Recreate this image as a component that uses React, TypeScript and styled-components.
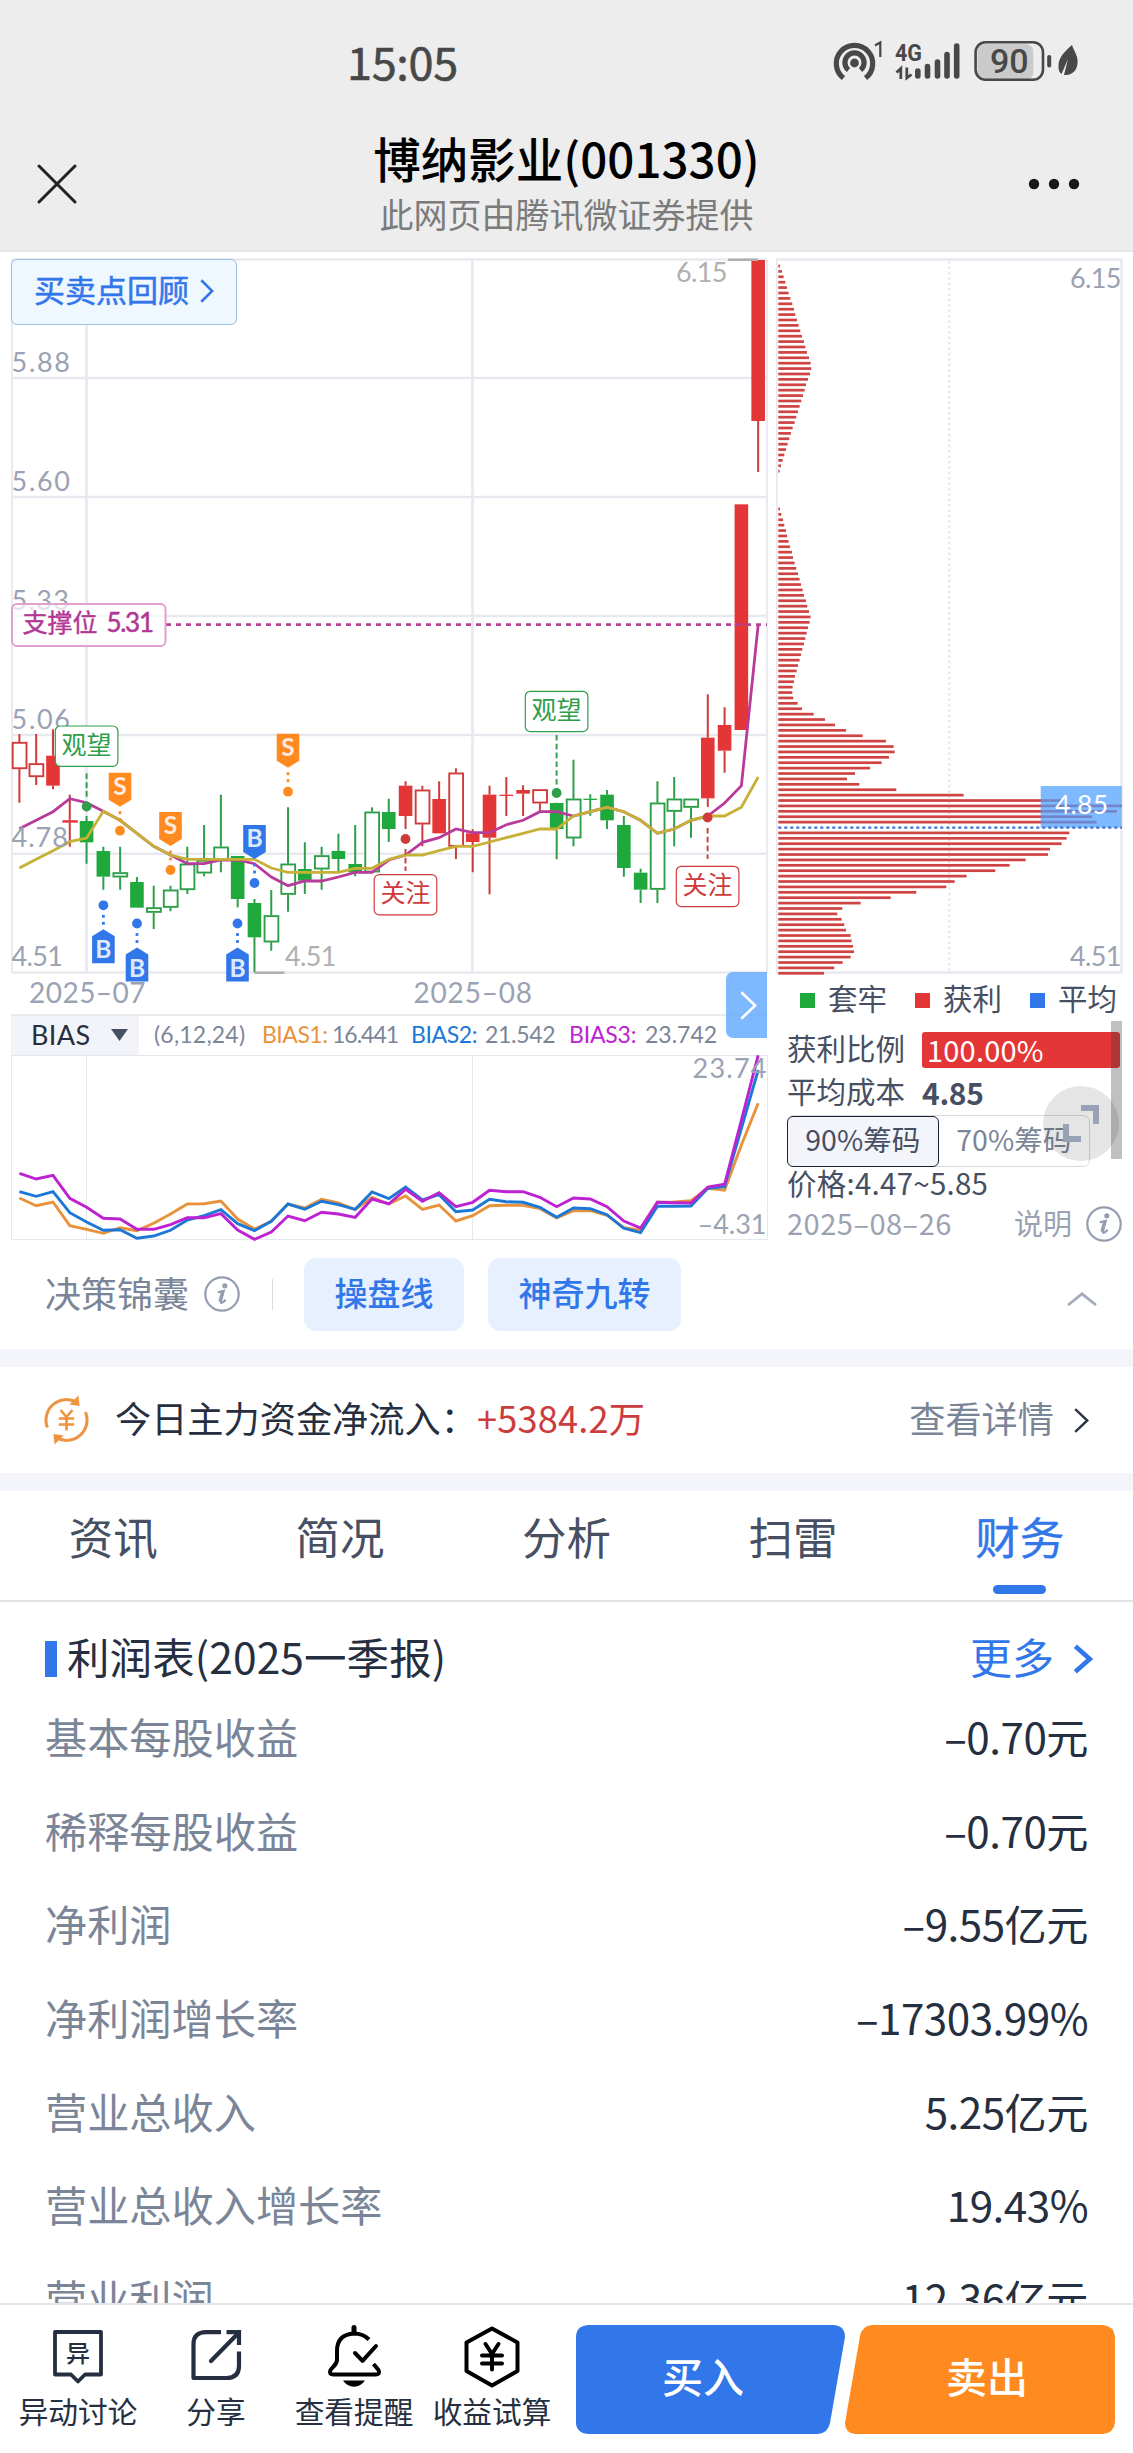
import React from 'react';
import styled, { createGlobalStyle } from 'styled-components';

const CJK = '"Noto Sans CJK SC", "Noto Sans", sans-serif';
const NUM = 'Lato, "Noto Sans CJK SC", sans-serif';

const C = {
  red: '#e43636',
  redLine: '#cf3b3b',
  green: '#1fa83c',
  greenLine: '#2f9e4a',
  blue: '#3277ea',
  ink: '#262f40',
  slate: '#475063',
  muted: '#7b8598',
  pale: '#9aa2b3',
  grid: '#e8e9ef',
  ma: '#b83a9b',
  maSlow: '#c6b136',
};

const GlobalStyle = createGlobalStyle`
  * { box-sizing: border-box; }
  body { margin: 0; background: #fff; font-family: ${CJK}; }
  svg { display: block; }
`;

const Screen = styled.div`
  width: 1133px;
  height: 2453px;
  overflow: hidden;
  display: flex;
  flex-direction: column;
  background: #fff;
`;

/* ---------- header ---------- */

const Header = styled.header`
  height: 252px;
  flex: none;
  background: #ededed;
  border-bottom: 2px solid #e6e6e6;
  display: flex;
  flex-direction: column;
`;

const StatusBar = styled.div`
  height: 124px;
  padding: 0 45px 0 347px;
  display: flex;
  justify-content: space-between;
  align-items: center;
`;

const Clock = styled.span`
  padding-bottom: 2px;
  font-size: 45px;
  font-weight: 400;
  line-height: 60px;
  letter-spacing: -0.3px;
  color: #484848;
  -webkit-text-stroke: 0.6px #484848;
`;

const NavBar = styled.div`
  flex: 1;
  display: grid;
  grid-template-columns: 200px 1fr 200px;
`;

const NavSide = styled.div<{ $end?: boolean }>`
  display: flex;
  align-items: center;
  justify-content: ${(p) => (p.$end ? 'flex-end' : 'flex-start')};
  padding: 0 53px 6px 37px;
`;

const NavTitles = styled.div`
  display: flex;
  flex-direction: column;
  align-items: center;
  padding-top: 3px;
`;

const Title = styled.h1`
  margin: 0;
  font-size: 47.5px;
  font-weight: 500;
  line-height: 62px;
  color: #000;
`;

const Subtitle = styled.span`
  margin-top: 4px;
  font-size: 34px;
  line-height: 42px;
  color: #7b7b7b;
`;

/* ---------- chart area ---------- */

const ChartArea = styled.section`
  height: 989px;
  flex: none;
  display: grid;
  grid-template-columns: 776px 357px;
`;

const ChartColumn = styled.div`
  position: relative;
  display: flex;
  flex-direction: column;
`;

const ReviewButton = styled.button`
  position: absolute;
  left: 11px;
  top: 7px;
  width: 226px;
  height: 66px;
  display: flex;
  align-items: center;
  gap: 11px;
  padding: 0 0 6px 22px;
  border: 1px solid #9dbfe6;
  border-radius: 6px;
  background: #eff7ff;
  color: ${C.blue};
  font: 400 31px/40px ${CJK};
  -webkit-text-stroke: 0.5px ${C.blue};
  svg { margin-top: 3px; }
`;

const NextButton = styled.button`
  position: absolute;
  left: 726px;
  top: 720px;
  width: 41px;
  height: 66px;
  padding: 0 0 0 3px;
  border: 0;
  border-radius: 7px 0 0 7px;
  background: rgba(101, 172, 255, 0.84);
  display: flex;
  align-items: center;
  justify-content: center;
`;

const IndicatorBar = styled.div`
  height: 41px;
  margin: 0 9px 0 11px;
  border-top: 2px solid ${C.grid};
  display: flex;
  align-items: center;
  font-family: ${NUM};
`;

const IndicatorSelect = styled.div`
  width: 128px;
  height: 39px;
  padding: 0 11px 2px 20px;
  display: flex;
  align-items: center;
  justify-content: space-between;
  background: #f3f4f9;
  color: ${C.ink};
  font-size: 27px;
  letter-spacing: 0.4px;
`;

const IndicatorText = styled.span<{ $color: string; $w: number; $ml: number; $ls?: number }>`
  width: ${(p) => p.$w}px;
  margin-left: ${(p) => p.$ml}px;
  padding-bottom: 3px;
  color: ${(p) => p.$color};
  font-size: 23px;
  line-height: 30px;
  letter-spacing: ${(p) => p.$ls ?? 0}px;
  white-space: nowrap;
`;

/* ---------- chip distribution ---------- */

const Legend = styled.div`
  height: 43px;
  padding: 0 0 1px 24px;
  display: flex;
  align-items: center;
`;

const LegendItem = styled.span<{ $c: string; $w: number }>`
  width: ${(p) => p.$w}px;
  flex: none;
  display: flex;
  align-items: center;
  gap: 13px;
  font-size: 29.5px;
  line-height: 38px;
  color: ${C.slate};
  &::before {
    content: '';
    width: 15px;
    height: 15px;
    margin-top: 6px;
    background: ${(p) => p.$c};
  }
`;

const InfoPanel = styled.div`
  position: relative;
  flex: 1;
  padding: 9px 11px 0 11px;
  display: flex;
  flex-direction: column;
  color: ${C.slate};
  font-size: 29.5px;
`;

const InfoRow = styled.div<{ $h: number; $pb?: number }>`
  height: ${(p) => p.$h}px;
  padding-bottom: ${(p) => p.$pb ?? 0}px;
  display: flex;
  align-items: center;
  line-height: 36px;
  white-space: nowrap;
`;

const InfoLabel = styled.span`
  width: 135px;
  padding-bottom: 7px;
  line-height: 36px;
`;

const RatioBar = styled.div`
  width: 198px;
  height: 36px;
  padding-left: 5px;
  border-radius: 3px;
  background: ${C.red};
  color: #fff;
  font-size: 29px;
  line-height: 35px;
  letter-spacing: 0.2px;
`;

const Cost = styled.b`
  padding-bottom: 4px;
  font-size: 30px;
  line-height: 36px;
  font-weight: 700;
  letter-spacing: -0.3px;
`;

const ChipTabs = styled.div`
  width: 303px;
  height: 52px;
  flex: none;
  display: flex;
  border: 1px solid #d9dae0;
  border-radius: 7px;
`;

const ChipTab = styled.div<{ $on?: boolean }>`
  width: ${(p) => (p.$on ? 152 : 151)}px;
  height: ${(p) => (p.$on ? 51 : 50)}px;
  margin: ${(p) => (p.$on ? '-0.5px 0 0 -1px' : '0')};
  padding-bottom: 4px;
  display: flex;
  align-items: center;
  justify-content: center;
  border: ${(p) => (p.$on ? '1.5px solid #1c2233' : '0')};
  border-radius: 6px;
  background: ${(p) => (p.$on ? '#f4f5fb' : 'transparent')};
  color: ${(p) => (p.$on ? C.slate : C.muted)};
  font-size: 28.5px;
  line-height: 36px;
`;

const PriceText = styled.span`
  letter-spacing: 0.25px;
`;

const DateText = styled.span`
  color: ${C.pale};
  font-size: 29px;
  letter-spacing: 0.5px;
`;

const Explain = styled.span`
  margin-left: auto;
  display: flex;
  align-items: center;
  gap: 14px;
  color: ${C.pale};
  font-size: 29px;
  line-height: 36px;
  svg { margin-top: 4px; }
`;

const ScrollThumb = styled.div`
  position: absolute;
  left: 335px;
  top: 2px;
  width: 11px;
  height: 138px;
  background: rgba(60, 60, 60, 0.32);
`;

const ExpandBadge = styled.div`
  position: absolute;
  left: 267px;
  top: 67px;
  width: 76px;
  height: 75px;
  border-radius: 50%;
  background: rgba(0, 0, 0, 0.1);
`;

/* ---------- lower sections ---------- */

const ToolsRow = styled.section`
  height: 108px;
  flex: none;
  padding: 0 36px 2px 45px;
  display: flex;
  align-items: center;
`;

const ToolsLabel = styled.span`
  width: 159px;
  font-size: 36px;
  line-height: 48px;
  padding-bottom: 4px;
  color: ${C.muted};
`;

const Divider = styled.i`
  width: 1px;
  height: 31px;
  margin: 0 31px 0 32px;
  background: #dadce2;
`;

const Pill = styled.button<{ $w: number }>`
  width: ${(p) => p.$w}px;
  height: 73px;
  margin-right: 24px;
  padding: 0 0 4px;
  border: 0;
  border-radius: 12px;
  background: #e6f0fe;
  color: ${C.blue};
  font: 500 33px/44px ${CJK};
`;

const Push = styled.span`
  margin: 9px 0 0 auto;
`;

const Band = styled.div`
  height: 18px;
  flex: none;
  background: #f4f5fa;
`;

const FundRow = styled.section`
  height: 106px;
  flex: none;
  padding: 0 44px 0 43px;
  display: flex;
  align-items: center;
  font-size: 36.2px;
  line-height: 50px;
`;

const FundText = styled.span`
  margin-left: 25px;
  padding-bottom: 6px;
  color: ${C.ink};
`;

const FundValue = styled.span`
  padding-bottom: 6px;
  color: #cc3c3c;
  letter-spacing: 0.2px;
`;

const More = styled.span<{ $c: string; $size: number; $gap: number }>`
  margin-left: auto;
  display: flex;
  align-items: center;
  gap: ${(p) => p.$gap}px;
  color: ${(p) => p.$c};
  font-size: ${(p) => p.$size}px;
  line-height: 50px;
  span { padding-bottom: 6px; }
`;

const Tabs = styled.nav`
  height: 111px;
  flex: none;
  display: grid;
  grid-template-columns: repeat(5, 1fr);
  border-bottom: 2px solid #e1e3e8;
`;

const Tab = styled.div<{ $on?: boolean }>`
  display: flex;
  flex-direction: column;
  align-items: center;
  padding-top: 15px;
  font-size: 44.5px;
  line-height: 60px;
  color: ${(p) => (p.$on ? C.blue : C.slate)};
  -webkit-text-stroke: ${(p) => (p.$on ? '0.4px' : '0')} ${C.blue};
  &::after {
    content: '';
    width: 53px;
    height: 9px;
    margin-top: 19px;
    border-radius: 5px;
    background: ${(p) => (p.$on ? C.blue : 'transparent')};
  }
`;

const SectionHead = styled.div`
  height: 87px;
  flex: none;
  margin-top: 1px;
  padding: 25px 40px 0 45px;
  display: flex;
  align-items: center;
`;

const SectionTitle = styled.h2`
  margin: 0;
  display: flex;
  align-items: center;
  gap: 10px;
  font-size: 42.5px;
  line-height: 56px;
  font-weight: 400;
  letter-spacing: 0.1px;
  color: ${C.ink};
  span { padding-bottom: 7px; }
  &::before {
    content: '';
    width: 12px;
    height: 36px;
    background: ${C.blue};
  }
`;

const Sheet = styled.div`
  height: 613px;
  flex: none;
  overflow: hidden;
`;

const SheetRow = styled.div`
  height: 93.7px;
  padding: 0 45px 2px;
  display: flex;
  align-items: center;
  justify-content: space-between;
  font-size: 42.2px;
  line-height: 60px;
  color: ${C.muted};
`;

const SheetValue = styled.span`
  color: ${C.ink};
  letter-spacing: -0.5px;
`;

const BottomBar = styled.footer`
  flex: 1;
  padding: 20px 18px 0 9px;
  display: flex;
  border-top: 2px solid #e5e6eb;
  background: #fff;
`;

const Action = styled.div`
  width: 138px;
  display: flex;
  flex-direction: column;
  align-items: center;
  font-size: 29.7px;
  line-height: 40px;
  color: ${C.ink};
  white-space: nowrap;
  svg { margin: -1px 0 3px; }
`;

const TradeButton = styled.button<{ $side: 'buy' | 'sell' }>`
  position: relative;
  width: ${(p) => (p.$side === 'buy' ? 269 : 270)}px;
  height: 109px;
  margin-left: ${(p) => (p.$side === 'buy' ? 15 : 0)}px;
  padding: ${(p) => (p.$side === 'buy' ? '0 15px 10px 0' : '0 0 10px 14px')};
  border: 0;
  background: none;
  color: #fff;
  font: 500 41px/56px ${CJK};
  svg {
    position: absolute;
    left: 0;
    top: 0;
  }
  span { position: relative; }
`;

/* ---------- data ---------- */

const STEP = 16.79;
const X0 = 19.4;
const cx = (i: number) => X0 + i * STEP;
const cy = (v: number) => 640 + v / 3;

type Candle = [high: number, low: number, top: number, bottom: number, filled: 0 | 1, up: 0 | 1];

const CANDLES: Candle[] = [
  [282, 488, 306, 387, 0, 1], [282, 435, 370, 411, 0, 1], [268, 448, 347, 437, 1, 1],
  [464, 620, 541, 547, 1, 1], [528, 671, 543, 607, 1, 0], [620, 749, 633, 710, 1, 0],
  [620, 749, 697, 712, 0, 0], [711, 803, 726, 803, 1, 0], [737, 867, 802, 818, 0, 0],
  [737, 814, 749, 803, 0, 0], [620, 762, 671, 750, 0, 0], [555, 709, 660, 700, 0, 0],
  [464, 697, 620, 660, 0, 0], [648, 802, 648, 777, 1, 0], [777, 997, 789, 892, 1, 0],
  [750, 932, 826, 907, 0, 0], [502, 815, 671, 764, 0, 0], [607, 762, 687, 722, 1, 0],
  [620, 749, 646, 688, 0, 0], [581, 695, 633, 657, 1, 0], [555, 709, 672, 697, 1, 0],
  [502, 697, 515, 697, 0, 0], [476, 606, 516, 567, 1, 0], [424, 567, 437, 528, 1, 1],
  [437, 619, 449, 553, 0, 1], [424, 580, 477, 580, 1, 1], [385, 657, 398, 620, 0, 1],
  [568, 697, 580, 606, 1, 1], [437, 763, 464, 593, 1, 1], [411, 528, 464, 467, 1, 1],
  [436, 528, 450, 461, 1, 1], [448, 515, 448, 490, 0, 1], [488, 658, 489, 567, 1, 0],
  [359, 619, 476, 595, 0, 0], [463, 527, 476, 480, 1, 0], [450, 567, 464, 541, 1, 0],
  [528, 710, 555, 684, 1, 0], [686, 789, 698, 749, 1, 0], [424, 789, 488, 749, 0, 0],
  [411, 619, 476, 515, 0, 0], [476, 593, 476, 503, 0, 0], [163, 501, 293, 475, 1, 1],
  [202, 398, 255, 332, 1, 1], [-407, 270, -407, 270, 1, 1], [-1140, -504, -1140, -657, 1, 1],
];

const MA_FAST = [
  566, 541, 515, 476, 488, 514, 541, 580, 619, 645, 671, 671, 660, 660, 671, 711, 737, 723, 723, 711,
  697, 697, 660, 645, 607, 593, 567, 578, 578, 554, 541, 515, 515, 528, 515, 502, 515, 541, 580, 567,
  541, 528, 489, 437, -46,
];
const MA_SLOW = [
  684, 658, 632, 605, 594, 514, 541, 580, 619, 645, 658, 658, 658, 658, 658, 684, 697, 697, 697, 697,
  685, 685, 658, 645, 645, 632, 619, 619, 606, 593, 580, 567, 567, 528, 515, 502, 515, 541, 580, 567,
  541, 528, 528, 502, 411,
];

const BIAS = [
  {
    color: '#e8923c',
    v: [684, 707, 696, 767, 778, 790, 773, 782, 760, 732, 702, 701, 693, 747, 777, 754, 702, 714, 688, 699, 719, 682, 702, 678, 718, 705, 753, 737, 707, 706, 706, 716, 744, 722, 722, 736, 773, 781, 697, 696, 692, 655, 661, 525, 400],
  },
  {
    color: '#1b78d6',
    v: [665, 679, 665, 728, 756, 781, 779, 805, 798, 781, 750, 737, 719, 761, 782, 754, 702, 718, 694, 704, 718, 666, 686, 651, 690, 674, 725, 720, 688, 695, 697, 712, 742, 714, 716, 734, 775, 788, 709, 709, 708, 655, 650, 475, 300],
  },
  {
    color: '#bd22d2',
    v: [610, 627, 616, 685, 712, 745, 747, 778, 778, 764, 743, 743, 731, 780, 808, 786, 738, 752, 727, 732, 742, 687, 702, 658, 694, 668, 710, 697, 661, 665, 665, 682, 710, 684, 687, 710, 753, 774, 697, 698, 699, 651, 643, 450, 256],
  },
];

const CHIPS = [
  60, 66, 71, 76, 81, 86, 91, 97, 102, 106, 111, 116, 121, 126, 132, 136, 141, 147, 152, 154, 150, 144,
  138, 134, 129, 124, 119, 114, 109, 104, 98, 93, 88, 83, 78, 73, 68, 63, 59, 0, 0, 0, 0, 0, 0, 60, 64,
  69, 73, 78, 81, 86, 90, 96, 99, 104, 109, 114, 119, 123, 128, 132, 138, 142, 147, 152, 149, 144, 140,
  136, 132, 127, 123, 119, 114, 110, 105, 102, 98, 97, 100, 113, 126, 161, 195, 225, 258, 308, 378, 401,
  404, 387, 365, 330, 285, 261, 298, 409, 611, 905, 1086, 1071, 996, 1010, 0, 928, 920, 905, 870, 864,
  797, 749, 706, 620, 584, 559, 469, 392, 302, 247, 232, 245, 253, 258, 272, 275, 279, 282, 272, 248,
  223, 192,
];

const GRID_Y = [259.5, 378, 497, 616, 735, 853.7, 972.5];
const GRID_X = [86.5, 472.5];

const linePath = (vals: number[], y: (v: number) => number) =>
  vals.map((v, i) => `${i ? 'L' : 'M'}${cx(i).toFixed(1)} ${y(v).toFixed(1)}`).join('');

interface LabelProps {
  x: number;
  y: number;
  w?: number;
  size?: number;
  fill?: string;
  children: React.ReactNode;
}

const AxisLabel = ({ x, y, w, size = 27, fill = C.pale, children }: LabelProps) => (
  <text x={x} y={y} fontFamily={NUM} fontSize={size} fill={fill} textLength={w}>
    {children}
  </text>
);

const Marker = ({ x, y, kind, up }: { x: number; y: number; kind: 'S' | 'B'; up?: boolean }) => {
  const color = kind === 'S' ? '#ff8a1f' : C.blue;
  const d = up
    ? `M${x - 11.3} ${y}V${y - 27}L${x} ${y - 34}L${x + 11.3} ${y - 27}V${y}Z`
    : `M${x - 11.3} ${y}V${y + 27}L${x} ${y + 34}L${x + 11.3} ${y + 27}V${y}Z`;
  const s = up ? -1 : 1;
  return (
    <g fill={color}>
      <path d={d} />
      <rect x={x - 1.4} y={y + s * 40 - 1.4} width="2.8" height="2.8" />
      <rect x={x - 1.4} y={y + s * 47 - 1.4} width="2.8" height="2.8" />
      <circle cx={x} cy={y + s * 58} r="4.9" />
      <text
        x={x}
        y={up ? y - 5 : y + 22}
        fill="#fff"
        fillOpacity="0.86"
        fontFamily={NUM}
        fontSize="24.5"
        fontWeight="700"
        textAnchor="middle"
      >
        {kind}
      </text>
    </g>
  );
};

const Tag = ({ x, y, color, from, to, dot, text }: {
  x: number; y: number; color: string; from: number; to: number; dot: number; text: string;
}) => (
  <g>
    <path d={`M${x} ${from}V${to}`} stroke={color} strokeWidth="1.9" strokeDasharray="5.6 3.2" />
    <circle cx={x} cy={dot} r="4.9" fill={color} />
    <rect x={x - 31.3} y={y} width="62.6" height="40.3" rx="5" fill="#fff" stroke={color} strokeWidth="1.2" />
    <text x={x - 25} y={y + 27.6} fontFamily={CJK} fontSize="25" fill={color}>
      {text}
    </text>
  </g>
);

const PriceChart = () => (
  <svg width="776" height="762" viewBox="0 252 776 762">
    <g stroke={C.grid} strokeWidth="2.6" fill="none">
      {GRID_Y.map((y) => <path key={y} d={`M12 ${y}H767`} />)}
      {GRID_X.map((x) => <path key={x} d={`M${x} 259V973`} />)}
      <path d="M12 259V973M767 259V973" strokeWidth="1.8" />
    </g>
    <g strokeWidth="2">
      {CANDLES.map(([h, l, t, b, filled, up], i) => {
        const line = up ? C.redLine : C.greenLine;
        const x = cx(i);
        return (
          <g key={i} stroke={line}>
            <path d={`M${x} ${cy(h)}V${cy(t)}M${x} ${cy(b)}V${cy(l)}`} />
            {filled ? (
              <rect x={x - 6.8} y={cy(t)} width="13.6" height={Math.max(1.3, (b - t) / 3)} fill={up ? C.red : C.green} stroke="none" />
            ) : (
              <rect x={x - 6.7} y={cy(t) + 0.8} width="13.8" height={(b - t) / 3 - 1.6} fill="#fff" strokeWidth="1.9" />
            )}
          </g>
        );
      })}
    </g>
    <path d="M62.3 821.5H78" stroke={C.red} strokeWidth="2" />
    <path d={linePath(MA_FAST, cy)} fill="none" stroke={C.ma} strokeWidth="2.8" />
    <path d={linePath(MA_SLOW, cy)} fill="none" stroke={C.maSlow} strokeWidth="2.8" />
    <AxisLabel x={11.5} y={371.5} w={58.5}>5.88</AxisLabel>
    <AxisLabel x={11.5} y={490.5} w={58.5}>5.60</AxisLabel>
    <AxisLabel x={11.5} y={609.5} w={57.5}>5.33</AxisLabel>
    <AxisLabel x={11.5} y={728.5} w={58.5}>5.06</AxisLabel>
    <AxisLabel x={11.5} y={847} w={56.5}>4.78</AxisLabel>
    <AxisLabel x={11.5} y={966} w={51.5}>4.51</AxisLabel>
    <AxisLabel x={676} y={281.5} w={51.5} fill="#b0b0b0">6.15</AxisLabel>
    <AxisLabel x={285} y={966} w={51.5} fill="#b0b0b0">4.51</AxisLabel>
    <path d="M728 259.7H758M254.5 972.7H284.5" stroke="#b0b0b0" strokeWidth="2.6" />
    <path d="M166 624.7H767" stroke="#b04492" strokeWidth="2.8" strokeDasharray="5 5" />
    <rect x="12" y="604" width="153.5" height="42" rx="5" fill="#fff" fillOpacity="0.7" stroke="#dfa0d0" strokeWidth="2" />
    <text x="22.5" y="632" fontFamily={CJK} fontSize="25" fill="#b23693" stroke="#b23693" strokeWidth="0.4">支撑位</text>
    <text x="106.5" y="632" fontFamily={NUM} fontSize="26" fill="#b23693" stroke="#b23693" strokeWidth="0.5" textLength="47.5">5.31</text>
    <Marker x={120} y={772.7} kind="S" />
    <Marker x={170.5} y={812} kind="S" />
    <Marker x={288} y={733.7} kind="S" />
    <Marker x={254.5} y={825} kind="B" />
    <Marker x={103.4} y={963.3} kind="B" up />
    <Marker x={137} y={981.5} kind="B" up />
    <Marker x={237.5} y={981.5} kind="B" up />
    <Tag x={86.6} y={726} color={C.greenLine} from={773.5} to={797} dot={806.5} text="观望" />
    <Tag x={556.6} y={691.3} color={C.greenLine} from={735} to={785} dot={793} text="观望" />
    <Tag x={405.5} y={874.6} color={C.redLine} from={849} to={871} dot={839} text="关注" />
    <Tag x={707.6} y={866.3} color={C.redLine} from={828} to={859} dot={817.5} text="关注" />
    <AxisLabel x={29} y={1002.5} w={116.5} size={28}>2025–07</AxisLabel>
    <AxisLabel x={413.5} y={1002.5} w={118.5} size={28}>2025–08</AxisLabel>
  </svg>
);

const BiasChart = () => (
  <svg width="776" height="186" viewBox="0 1055 776 186">
    <g stroke="#e6e7eb" strokeWidth="1">
      <path d="M11.5 1055.5H767.5M11.5 1239.5H767.5" />
      {[11.5, ...GRID_X, 767.5].map((x) => <path key={x} d={`M${x} 1055V1239`} />)}
    </g>
    {BIAS.map(({ color, v }) => (
      <path key={color} d={linePath(v, (n) => 970 + n / 3)} fill="none" stroke={color} strokeWidth="2.9" />
    ))}
    <AxisLabel x={692.5} y={1077.5} w={74}>23.74</AxisLabel>
    <AxisLabel x={697.5} y={1234} w={69}>–4.31</AxisLabel>
  </svg>
);

const CHIP_PITCH = (973.3 - 266) / (CHIPS.length - 1);

const ChipChart = () => (
  <svg width="357" height="724" viewBox="776 252 357 724">
    <path d="M776.5 259.5H1121.5V972.5H776.5Z" fill="none" stroke={C.grid} strokeWidth="2.4" />
    <path d="M949.3 261V972" stroke="#e4e4e8" strokeWidth="2" strokeDasharray="2.6 2.8" />
    {CHIPS.map((w, i) =>
      w ? (
        <rect key={i} x="778.3" y={266 + i * CHIP_PITCH - 1.35} width={(w - 55) / 3} height="2.7" fill="#cf4343" />
      ) : null,
    )}
    <rect x="1040.7" y="786" width="81" height="41.6" fill="#4d9eff" fillOpacity="0.72" />
    <path d="M778.3 827.6H1122" stroke="#3a6fd2" strokeWidth="2.4" strokeDasharray="3 3" />
    <AxisLabel x={1055} y={813.5} w={53} size={26.5} fill="#fff">4.85</AxisLabel>
    <AxisLabel x={1070} y={287.5} w={51.5}>6.15</AxisLabel>
    <AxisLabel x={1070} y={966} w={51.5}>4.51</AxisLabel>
  </svg>
);

/* ---------- icons ---------- */

const Chevron = ({ w, h, color, sw }: { w: number; h: number; color: string; sw: number }) => (
  <svg width={w} height={h} viewBox={`0 0 ${w} ${h}`} fill="none" stroke={color} strokeWidth={sw}>
    <path d={`M${sw / 2} ${sw / 2}L${w - sw * 0.7} ${h / 2}L${sw / 2} ${h - sw / 2}`} />
  </svg>
);

const InfoIcon = ({ size = 36 }: { size?: number }) => (
  <svg width={size} height={size} viewBox="0 0 36 36" fill="none" stroke="#959db0">
    <circle cx="18" cy="18" r="16.7" strokeWidth="2.2" />
    <circle cx="20.8" cy="9.8" r="2.6" fill="#959db0" stroke="none" />
    <path d="M13.8 16.4Q16.5 15.2 19.8 14.8L17 24.6Q16.4 27.4 18.4 26.6Q20 25.8 21.6 23.8" strokeWidth="2.2" />
    <path d="M18.4 16L16 25.6" strokeWidth="3.2" />
  </svg>
);

const StatusIcons = () => (
  <svg width="256" height="50" viewBox="832 38 256 50" fill="none" stroke="#484848">
    <g strokeWidth="5.2">
      <path d="M843.5 79A18.2 18.2 0 1 1 865.5 79" />
      <path d="M848.5 71A9.6 9.6 0 1 1 860.5 71" />
    </g>
    <circle cx="854.5" cy="64" r="4.4" fill="#484848" stroke="none" />
    <path d="M875 46.5L880.3 43.5V58" strokeWidth="2.2" />
    <text x="895" y="62" fontFamily="Roboto, sans-serif" fontSize="24" fontWeight="700" fill="#484848" stroke="none" textLength="27" lengthAdjust="spacingAndGlyphs">4G</text>
    <path d="M896.5 73.5L900.8 69.5V80M911.5 75.5L906.8 79V68.5" strokeWidth="2.8" />
    <g strokeWidth="5.6" strokeLinecap="round">
      <path d="M917.8 72V77M927.5 67.5V77M937.5 63V77M947 55.5V77M956.7 47V77" />
    </g>
    <rect x="977.5" y="45" width="56" height="36" rx="8" fill="#cacaca" stroke="none" />
    <rect x="1033.5" y="45" width="10" height="36" fill="#ededed" stroke="none" />
    <rect x="975.6" y="43.2" width="67.4" height="37.6" rx="10" strokeWidth="2.6" />
    <text x="1009.3" y="74" fontFamily="Roboto, sans-serif" fontSize="34" fontWeight="500" fill="#484848" stroke="none" textAnchor="middle">90</text>
    <path d="M1049.2 58V66.5" strokeWidth="4" strokeLinecap="round" />
    <path d="M1072 46C1064 53 1058 59 1058.5 68C1058.5 72 1060 74 1061.5 75L1068 60L1064 76C1072 77 1078 71 1077.6 62C1077.4 56 1074 52 1072 46Z" fill="#484848" stroke="none" />
  </svg>
);

const FundIcon = () => (
  <svg width="47" height="52" viewBox="0 0 47 52" fill="none" stroke="#ee933f" strokeWidth="3">
    <path d="M4.4 33.5A20.4 20.4 0 0 1 34 8.6" />
    <path d="M42.4 18A20.4 20.4 0 0 1 13 43.4" />
    <path d="M35.4 1.5L36.6 12L26.5 10.6ZM11.6 50.5L10.4 40L20.5 41.4Z" fill="#ee933f" stroke="none" />
    <path d="M17.5 16L23.5 23L29.5 16M23.5 23V36.5M15.8 24.5H31.2M15.8 30.5H31.2" strokeWidth="2.6" />
  </svg>
);

const DiscussIcon = () => (
  <svg width="54" height="64" viewBox="0 0 54 64" fill="none" stroke={C.ink}>
    <path d="M4 8H50V50.5H34L27 57.5L20 50.5H4Z" strokeWidth="3.8" strokeLinejoin="round" />
    <text x="27" y="37.5" textAnchor="middle" fontFamily={CJK} fontSize="24" fontWeight="500" fill={C.ink} stroke="none">异</text>
  </svg>
);

const ShareIcon = () => (
  <svg width="54" height="64" viewBox="0 0 54 64" fill="none" stroke={C.ink} strokeWidth="4.2">
    <path d="M32 8.2H17Q4.5 8.2 4.5 20V54H37.5Q50 54 50 42V27.5" strokeLinejoin="round" />
    <path d="M37.5 8.2H50V21" />
    <path d="M49 9.5L22 37" strokeLinecap="round" />
  </svg>
);

const BellIcon = () => (
  <svg width="60" height="64" viewBox="0 0 60 64" fill="none" stroke="#000" strokeWidth="4">
    <path d="M30 3.5V8" strokeWidth="5" strokeLinecap="round" />
    <path d="M45 15.5Q39 9.5 30 9.5Q13 10.5 13 27V36Q13 39 9.5 42.5L6.5 46Q4.5 50.5 9.5 50.5H51.5Q56.5 50.5 54.5 46L49.5 40" strokeLinejoin="round" />
    <path d="M31 29L38.5 36.8L52 22" strokeLinecap="round" strokeLinejoin="round" />
    <path d="M19 56.5H41Q37 62.5 30 62.8Q23 62.5 19 56.5Z" fill="#000" stroke="none" />
  </svg>
);

const ProfitIcon = () => (
  <svg width="60" height="64" viewBox="0 0 60 64" fill="none" stroke="#000" strokeWidth="4" strokeLinejoin="round" strokeLinecap="round">
    <path d="M30 4.5L55.5 18.5V47L30 61.5L4.5 47V18.5Z" />
    <path d="M23.5 20L30 30L36.5 20M30 30V45.5M20 31.5H40M20 39.5H40" />
  </svg>
);

/* ---------- content ---------- */

const ROWS: [string, string][] = [
  ['基本每股收益', '–0.70元'],
  ['稀释每股收益', '–0.70元'],
  ['净利润', '–9.55亿元'],
  ['净利润增长率', '–17303.99%'],
  ['营业总收入', '5.25亿元'],
  ['营业总收入增长率', '19.43%'],
  ['营业利润', '–12.36亿元'],
];

const ACTIONS: [string, () => React.JSX.Element][] = [
  ['异动讨论', DiscussIcon],
  ['分享', ShareIcon],
  ['查看提醒', BellIcon],
  ['收益试算', ProfitIcon],
];

export default function App() {
  return (
    <>
      <GlobalStyle />
      <Screen>
        <Header>
          <StatusBar>
            <Clock>15:05</Clock>
            <StatusIcons />
          </StatusBar>
          <NavBar>
            <NavSide>
              <svg width="40" height="40" viewBox="0 0 40 40" stroke="#222" strokeWidth="3" strokeLinecap="round">
                <path d="M2 2L38 38M38 2L2 38" />
              </svg>
            </NavSide>
            <NavTitles>
              <Title>博纳影业(001330)</Title>
              <Subtitle>此网页由腾讯微证券提供</Subtitle>
            </NavTitles>
            <NavSide $end>
              <svg width="52" height="12" viewBox="0 0 52 12" fill="#181818">
                <circle cx="6" cy="6" r="5.2" />
                <circle cx="26" cy="6" r="5.2" />
                <circle cx="46" cy="6" r="5.2" />
              </svg>
            </NavSide>
          </NavBar>
        </Header>

        <ChartArea>
          <ChartColumn>
            <PriceChart />
            <IndicatorBar>
              <IndicatorSelect>
                BIAS
                <svg width="17" height="12" viewBox="0 0 17 12" fill={C.slate}>
                  <path d="M0 0H17L8.5 12Z" />
                </svg>
              </IndicatorSelect>
              <IndicatorText $color={C.muted} $w={93} $ml={15} $ls={0.2}>(6,12,24)</IndicatorText>
              <IndicatorText $color="#e8923c" $w={67} $ml={15} $ls={-0.5}>BIAS1:</IndicatorText>
              <IndicatorText $color={C.muted} $w={72} $ml={3} $ls={-1}>16.441</IndicatorText>
              <IndicatorText $color="#1b78d6" $w={67} $ml={7} $ls={-0.4}>BIAS2:</IndicatorText>
              <IndicatorText $color={C.muted} $w={76} $ml={7} $ls={-0.3}>21.542</IndicatorText>
              <IndicatorText $color="#bd22d2" $w={67} $ml={8} $ls={-0.2}>BIAS3:</IndicatorText>
              <IndicatorText $color={C.muted} $w={76} $ml={9}>23.742</IndicatorText>
            </IndicatorBar>
            <BiasChart />
            <ReviewButton>
              买卖点回顾
              <Chevron w={14} h={24} color={C.blue} sw={2.6} />
            </ReviewButton>
            <NextButton>
              <Chevron w={17} h={29} color="#fff" sw={2.6} />
            </NextButton>
          </ChartColumn>

          <ChartColumn>
            <ChipChart />
            <Legend>
              <LegendItem $c={C.green} $w={115}>套牢</LegendItem>
              <LegendItem $c={C.red} $w={115}>获利</LegendItem>
              <LegendItem $c={C.blue} $w={92}>平均</LegendItem>
            </Legend>
            <InfoPanel>
              <InfoRow $h={44}>
                <InfoLabel>获利比例</InfoLabel>
                <RatioBar>100.00%</RatioBar>
              </InfoRow>
              <InfoRow $h={43}>
                <InfoLabel>平均成本</InfoLabel>
                <Cost>4.85</Cost>
              </InfoRow>
              <ChipTabs>
                <ChipTab $on>90%筹码</ChipTab>
                <ChipTab>70%筹码</ChipTab>
              </ChipTabs>
              <InfoRow $h={33} $pb={3}><PriceText>价格:4.47~5.85</PriceText></InfoRow>
              <InfoRow $h={46} $pb={3}>
                <DateText>2025–08–26</DateText>
                <Explain>
                  说明
                  <InfoIcon />
                </Explain>
              </InfoRow>
              <ScrollThumb />
              <ExpandBadge>
                <svg width="76" height="75" viewBox="1043 1086 76 75" fill="none" stroke="#98a1b6" strokeWidth="6">
                  <path d="M1081 1108H1096V1124M1066 1124V1139H1081" />
                </svg>
              </ExpandBadge>
            </InfoPanel>
          </ChartColumn>
        </ChartArea>

        <ToolsRow>
          <ToolsLabel>决策锦囊</ToolsLabel>
          <InfoIcon />
          <Divider />
          <Pill $w={160}>操盘线</Pill>
          <Pill $w={193}>神奇九转</Pill>
          <Push>
            <svg width="30" height="14" viewBox="0 0 30 14" fill="none" stroke="#a3abbc" strokeWidth="2.8">
              <path d="M1 13L15 1.8L29 13" />
            </svg>
          </Push>
        </ToolsRow>
        <Band />
        <FundRow>
          <FundIcon />
          <FundText>今日主力资金净流入：</FundText>
          <FundValue>+5384.2万</FundValue>
          <More $c={C.muted} $size={36.2} $gap={20}>
            <span>查看详情</span>
            <Chevron w={15} h={25} color="#2c3340" sw={2.4} />
          </More>
        </FundRow>
        <Band />
        <Tabs>
          <Tab>资讯</Tab>
          <Tab>简况</Tab>
          <Tab>分析</Tab>
          <Tab>扫雷</Tab>
          <Tab $on>财务</Tab>
        </Tabs>
        <SectionHead>
          <SectionTitle><span>利润表(2025一季报)</span></SectionTitle>
          <More $c={C.blue} $size={42} $gap={19}>
            <span>更多</span>
            <Chevron w={20} h={30} color={C.blue} sw={4.6} />
          </More>
        </SectionHead>
        <Sheet>
          {ROWS.map(([label, value]) => (
            <SheetRow key={label}>
              <span>{label}</span>
              <SheetValue>{value}</SheetValue>
            </SheetRow>
          ))}
        </Sheet>
        <BottomBar>
          {ACTIONS.map(([label, Icon]) => (
            <Action key={label}>
              <Icon />
              {label}
            </Action>
          ))}
          <TradeButton $side="buy">
            <svg width="269" height="109" viewBox="0 0 269 109" fill={C.blue}>
              <path d="M12 0H258Q269 1 269 12L254 98Q252 108 242 109H12Q0 108 0 97V12Q0 1 12 0Z" />
            </svg>
            <span>买入</span>
          </TradeButton>
          <TradeButton $side="sell">
            <svg width="270" height="109" viewBox="0 0 270 109" fill="#ff8a1f">
              <path d="M27 0H258Q269 1 270 12V97Q269 108 258 109H10Q0 108 0 98L15 11Q17 1 27 0Z" />
            </svg>
            <span>卖出</span>
          </TradeButton>
        </BottomBar>
      </Screen>
    </>
  );
}
